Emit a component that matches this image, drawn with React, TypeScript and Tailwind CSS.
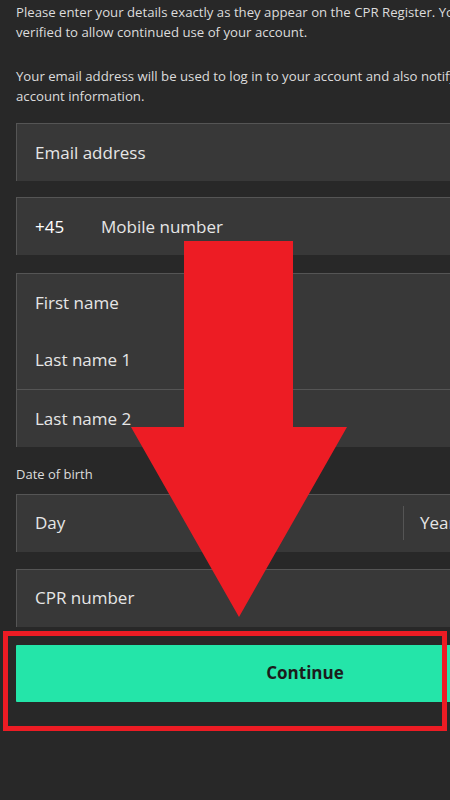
import React from "react";

const font = { fontFamily: '"Open Sans", "Noto Sans", sans-serif' };

function Field({ label, prefix }: { label: string; prefix?: string }) {
    return (
        <div className="h-[58px] bg-[#383838] border-l border-t border-[#555] flex items-center px-[18px] text-[17px] text-[#e6e6e6]">
            {prefix && <span className="w-[66px] text-white">{prefix}</span>}
            <span>{label}</span>
        </div>
    );
}

export default function App() {
    return (
        <div
            className="relative h-[800px] w-[450px] overflow-hidden bg-[#282828]"
            style={font}
        >
            <div className="w-[578px] ml-[16px] pt-[2px]">
                {/* Intro */}
                <div className="text-[13.2px] leading-[20px] text-[#dcdcdc]">
                    <p className="whitespace-nowrap">
                        Please enter your details exactly as they appear on the CPR Register. Your
                    </p>
                    <p>verified to allow continued use of your account.</p>
                    <p className="mt-[24px] whitespace-nowrap">
                        Your email address will be used to log in to your account and also notify
                    </p>
                    <p>account information.</p>
                </div>

                {/* Contact */}
                <div className="mt-[17px] flex flex-col gap-[16px]">
                    <Field label="Email address" />
                    <Field label="Mobile number" prefix="+45" />
                </div>

                {/* Names */}
                <div className="mt-[18px] bg-[#383838] border-l border-t border-[#555] text-[17px] text-[#e6e6e6]">
                    <div className="h-[57px] flex items-center px-[18px]">First name</div>
                    <div className="h-[58px] flex items-center px-[18px]">Last name 1</div>
                    <div className="h-[58px] flex items-center px-[18px] border-t border-[#555]">
                        Last name 2
                    </div>
                </div>

                {/* Date of birth */}
                <div className="mt-[18px] text-[13px] text-[#dcdcdc]">Date of birth</div>
                <div className="mt-[9px] h-[58px] bg-[#383838] border-l border-t border-[#555] flex items-center text-[17px] text-[#e6e6e6]">
                    <div className="w-[386px] px-[18px]">Day</div>
                    <div className="h-[34px] border-l border-[#555]" />
                    <div className="px-[16px]">Year</div>
                </div>

                <div className="mt-[17px]">
                    <Field label="CPR number" />
                </div>

                {/* Continue */}
                <button className="mt-[18px] w-full h-[57px] bg-[#24e5a9] rounded-[1px] text-[17px] font-bold text-[#1c1c1c]">
                    Continue
                </button>
            </div>

            {/* Annotation overlay */}
            <div className="absolute left-[3px] top-[631px] w-[444px] h-[100px] border-[5px] border-[#ed1c24]" />
            <svg
                className="absolute left-0 top-0"
                width="450"
                height="800"
                viewBox="0 0 450 800"
            >
                <polygon
                    points="184,241 293,241 293,427 347,427 239,617 131,427 184,427"
                    fill="#ed1c24"
                />
            </svg>
        </div>
    );
}
